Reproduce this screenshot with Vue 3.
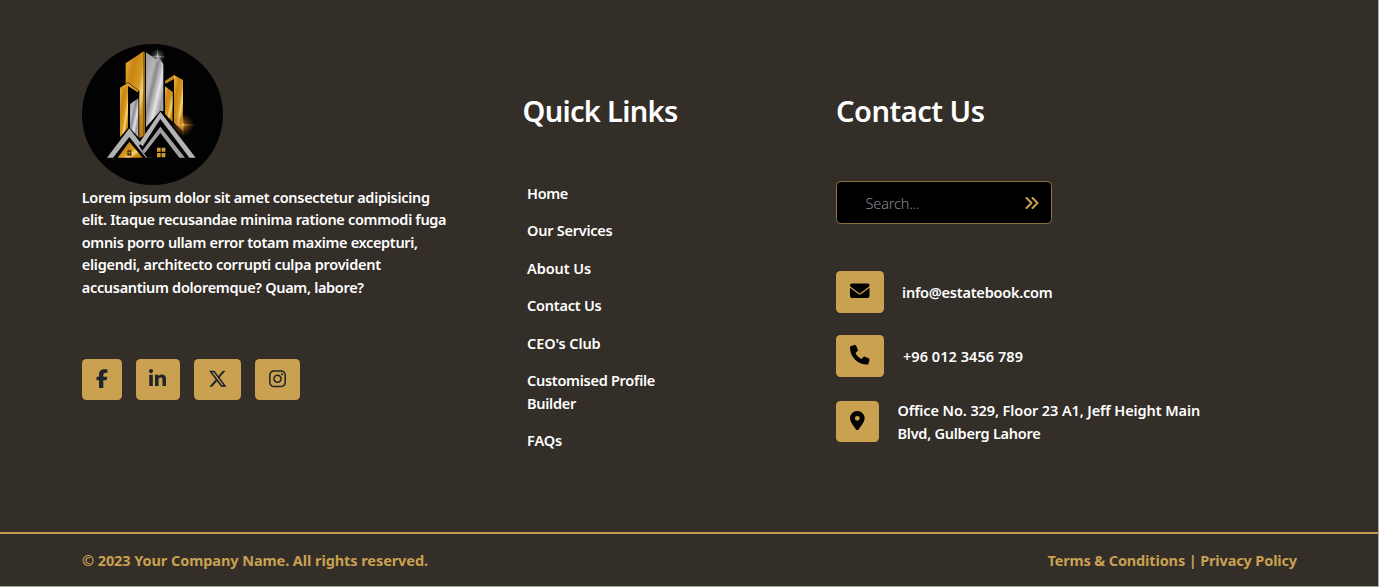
<script setup>
const about = [
  { text: 'Lorem ipsum dolor sit amet consectetur adipisicing', width: 348 },
  { text: 'elit. Itaque recusandae minima ratione commodi fuga', width: 364.5 },
  { text: 'omnis porro ullam error totam maxime excepturi,', width: 336 },
  { text: 'eligendi, architecto corrupti culpa provident', width: 299 },
  { text: 'accusantium doloremque? Quam, labore?', width: 282 },
]
const links = [
  [{ text: 'Home', width: 41 }],
  [{ text: 'Our Services', width: 85.5 }],
  [{ text: 'About Us', width: 64 }],
  [{ text: 'Contact Us', width: 74.5 }],
  [{ text: "CEO's Club", width: 73.5 }],
  [{ text: 'Customised Profile', width: 128 }, { text: 'Builder', width: 49 }],
  [{ text: 'FAQs', width: 35 }],
]
const office = [
  { text: 'Office No. 329, Floor 23 A1, Jeff Height Main', width: 302.5 },
  { text: 'Blvd, Gulberg Lahore', width: 143 },
]
const socials = [
  { name: 'Facebook', box: '0 0 320 512', w: 12, width: 40, d: 'M80 299.3V512H196V299.3h86.500l18-97.800H196V166.900c0-51.700 20.300-71.500 72.700-71.500c16.300 0 29.400 .4 37 1.200V7.900C291.400 4 256.400 0 236.200 0C129.300 0 80 50.500 80 159.400v42.100H14v97.800H80z' },
  { name: 'LinkedIn', box: '0 0 448 512', w: 17, width: 44.500, d: 'M100.280 448H7.400V148.900h92.880zM53.790 108.100C24.090 108.100 0 83.500 0 53.800a53.790 53.790 0 0 1 107.580 0c0 29.700-24.100 54.300-53.790 54.300zM447.900 448h-92.680V302.400c0-34.700-.7-79.200-48.290-79.200-48.290 0-55.690 37.700-55.690 76.700V448h-92.780V148.900h89.080v40.800h1.300c12.400-23.500 42.690-48.300 87.880-48.300 94 0 111.280 61.900 111.280 142.300V448z' },
  { name: 'X', box: '0 0 512 512', w: 19.500, width: 47.500, d: 'M389.200 48h70.600L305.600 224.200 487 464H345L233.700 318.600 106.500 464H35.800L200.700 275.500 26.800 48H172.400L272.900 180.900 389.200 48zM364.400 421.800h39.100L151.100 88h-42L364.400 421.800z' },
  { name: 'Instagram', box: '0 0 448 512', w: 17, width: 45, d: 'M224.100 141c-63.600 0-114.900 51.300-114.900 114.900s51.300 114.900 114.900 114.900S339 319.500 339 255.900 287.700 141 224.100 141zm0 189.600c-41.100 0-74.700-33.500-74.700-74.700s33.500-74.700 74.700-74.700 74.700 33.500 74.700 74.700-33.600 74.700-74.700 74.700zm146.400-194.300c0 14.900-12 26.800-26.800 26.800-14.900 0-26.800-12-26.800-26.800s12-26.800 26.800-26.800 26.800 12 26.800 26.800zm76.100 27.200c-1.700-35.900-9.900-67.700-36.200-93.900-26.200-26.200-58-34.400-93.900-36.200-37-2.100-147.900-2.100-184.900 0-35.800 1.700-67.600 9.900-93.900 36.100s-34.400 58-36.200 93.900c-2.100 37-2.100 147.900 0 184.900 1.700 35.900 9.900 67.700 36.200 93.900s58 34.400 93.900 36.200c37 2.100 147.900 2.100 184.900 0 35.900-1.700 67.700-9.900 93.900-36.200 26.200-26.200 34.400-58 36.200-93.900 2.100-37 2.100-147.800 0-184.800zM398.800 388c-7.800 19.600-22.900 34.700-42.600 42.600-29.500 11.700-99.500 9-132.100 9s-102.700 2.600-132.100-9c-19.600-7.800-34.700-22.900-42.600-42.600-11.700-29.500-9-99.500-9-132.100s-2.600-102.700 9-132.100c7.800-19.600 22.900-34.700 42.600-42.600 29.500-11.700 99.500-9 132.100-9s102.700-2.600 132.100 9c19.600 7.800 34.700 22.900 42.600 42.600 11.700 29.500 9 99.500 9 132.100s2.700 102.700-9 132.100z' },
]

const vFit = {
  mounted(el, { value }) {
    const natural = el.getBoundingClientRect().width
    el.style.letterSpacing = `${(value - natural) / el.textContent.length}px`
  },
}
</script>

<template>
  <footer class="footer">
    <div class="main">
      <section class="brand">
        <svg class="logo" viewBox="30 24 423 423" aria-label="Estatebook">
          <defs>
            <linearGradient id="gold" x1="0" y1="0" x2="1" y2="1">
              <stop offset="0" stop-color="#f0b43c" />
              <stop offset=".3" stop-color="#c88414" />
              <stop offset=".55" stop-color="#d8991f" />
              <stop offset=".68" stop-color="#f8d77a" />
              <stop offset=".8" stop-color="#d08d17" />
              <stop offset="1" stop-color="#b87408" />
            </linearGradient>
            <linearGradient id="silver" x1="0" y1="0" x2="1" y2="1">
              <stop offset="0" stop-color="#999" />
              <stop offset=".3" stop-color="#b8b8ba" />
              <stop offset=".42" stop-color="#8a8a8c" />
              <stop offset=".62" stop-color="#e4e4e6" />
              <stop offset=".78" stop-color="#9a9a9c" />
              <stop offset="1" stop-color="#bdbdbf" />
            </linearGradient>
            <radialGradient id="glow">
              <stop offset="0" stop-color="#ffe7ae" />
              <stop offset=".2" stop-color="#d68b28" stop-opacity=".75" />
              <stop offset="1" stop-color="#8c4510" stop-opacity="0" />
            </radialGradient>
            <radialGradient id="shine">
              <stop offset="0" stop-color="#fff" />
              <stop offset=".3" stop-color="#aaa" stop-opacity=".6" />
              <stop offset="1" stop-color="#777" stop-opacity="0" />
            </radialGradient>
          </defs>
          <circle cx="241.500" cy="235.500" r="211.500" fill="#020202" />
          <path d="M161 82 215 46V299L202 307V164L168 139 161 143Z" fill="url(#gold)" />
          <path d="M215 46 219 50V296L215 299Z" fill="#9e6812" />
          <path d="M222 49 250 68 263 67 274 84V226L265 224 222 274Z" fill="url(#silver)" />
          <path d="M144 158 168 148V276L144 304Z" fill="url(#gold)" />
          <path d="M168 140 200 164 197 169 169 151 145 160 144 155Z" fill="#d89b2b" />
          <path d="M174 204 199 187V304L174 276Z" fill="url(#silver)" />
          <path d="M279 151 302 168V258L279 234Z" fill="url(#gold)" />
          <path d="M306 117 333 132V284L306 260Z" fill="url(#gold)" />
          <path d="M279 135 306 117 306 129 280 143Z" fill="#c98b22" />
          <path d="M105 365 172 287 240 365" fill="#020202" />
          <path d="M137 365 172 317 212 365Z" fill="url(#gold)" />
          <path d="M105 365 172 277 240 365H222L172 303 123 365Z" fill="#b1b1b4" />
          <path d="M201 329 266 240 351 365H225Z" fill="#020202" />
          <path d="M201 322 265 227 371 365H352L265 249 212 331Z" fill="#b5b5b8" />
          <path d="M211 344 265 272 339 365H322L265 291 218 352Z" fill="#a0a0a3" />
          <path d="M166 344Q172 338 178 344V359H166Z" fill="#332009" />
          <path d="M172 341V359M166 350H178" stroke="#d69d31" stroke-width="2" />
          <path d="M255 335H266V347H255ZM269 335H280V347H269ZM255 351H266V364H255ZM269 351H280V364H269Z" fill="#d49a32" />
          <circle cx="257" cy="61" r="24" fill="url(#shine)" opacity=".7" />
          <path d="M257 38 260 60 279 62 260 66 257 81 254 66 237 61 254 59Z" fill="#c9c9c9" opacity=".5" />
          <circle cx="333" cy="267" r="34" fill="url(#glow)" opacity=".8" />
          <path d="M333 235 335 265 373 267 335 269 333 304 331 269 305 267 331 265Z" fill="#efb660" opacity=".5" />
        </svg>
        <p class="about">
          <span v-for="line in about" :key="line.text" class="line"><span v-fit="line.width">{{ line.text }}</span></span>
        </p>
        <div class="socials">
          <a v-for="s in socials" :key="s.name" class="tile" :aria-label="s.name" :style="{ width: s.width + 'px' }">
            <svg :viewBox="s.box" :style="{ width: s.w + 'px' }" class="glyph"><path :d="s.d" /></svg>
          </a>
        </div>
      </section>

      <nav class="quick">
        <h2><span v-fit="155">Quick Links</span></h2>
        <ul>
          <li v-for="(link, i) in links" :key="i">
            <span v-for="line in link" :key="line.text" class="line"><span v-fit="line.width">{{ line.text }}</span></span>
          </li>
        </ul>
      </nav>

      <section class="contact">
        <h2><span v-fit="148.500">Contact Us</span></h2>
        <div class="search">
          <span v-fit="54" class="placeholder">Search...</span>
          <svg class="chevrons" viewBox="0 0 14 12"><path d="M1.500 1 6.500 6 1.500 11M7.500 1 12.500 6 7.500 11" /></svg>
        </div>
        <div class="row mail">
          <span class="tile wide"><svg class="glyph black" viewBox="0 0 512 512"><path d="M48 64C21.500 64 0 85.500 0 112c0 15.100 7.100 29.300 19.200 38.400L236.800 313.600c11.400 8.500 27 8.500 38.400 0L492.800 150.400c12.100-9.100 19.200-23.300 19.200-38.400c0-26.500-21.500-48-48-48H48zM0 176V384c0 35.300 28.700 64 64 64H448c35.300 0 64-28.700 64-64V176L294.400 339.200c-22.800 17.100-54 17.100-76.800 0L0 176z" /></svg></span>
          <span class="line"><span v-fit="150.500">info@estatebook.com</span></span>
        </div>
        <div class="row phone">
          <span class="tile wide"><svg class="glyph black" viewBox="0 0 512 512"><path d="M164.900 24.600c-7.700-18.600-28-28.500-47.400-23.200l-88 24C12.100 30.200 0 46 0 64C0 311.400 200.600 512 448 512c18 0 33.800-12.100 38.600-29.500l24-88c5.300-19.400-4.600-39.700-23.200-47.400l-96-40c-16.300-6.800-35.200-2.100-46.300 11.600L304.700 368C234.300 334.700 177.300 277.700 144 207.300L193.300 167c13.700-11.200 18.400-30 11.600-46.300l-40-96z" /></svg></span>
          <span class="line"><span v-fit="120">+96 012 3456 789</span></span>
        </div>
        <div class="row place">
          <span class="tile pin"><svg class="glyph black" viewBox="0 0 384 512"><path d="M215.700 499.200C267 435 384 279.400 384 192C384 86 298 0 192 0S0 86 0 192c0 87.400 117 243 168.300 307.200c12.300 15.300 35.100 15.300 47.400 0zM192 128a64 64 0 1 1 0 128 64 64 0 1 1 0-128z" /></svg></span>
          <span>
            <span v-for="line in office" :key="line.text" class="line"><span v-fit="line.width">{{ line.text }}</span></span>
          </span>
        </div>
      </section>
    </div>
    <div class="bottom">
      <span v-fit="346">© 2023 Your Company Name. All rights reserved.</span>
      <span v-fit="249.500">Terms &amp; Conditions | Privacy Policy</span>
    </div>
  </footer>
</template>

<style>
body {
  margin: 0;
  background: #aaa6a1;
}
</style>

<style scoped>
.footer {
  box-sizing: border-box;
  width: 1378px;
  height: 586px;
  background: #332e28;
  color: #fff;
  font: 600 14.500px/22.500px "Noto Sans", "Open Sans", sans-serif;
  white-space: nowrap;
}
.main {
  display: grid;
  grid-template-columns: 440.750px 313.500px 1fr;
  height: 532px;
  padding-left: 81.750px;
}
.brand { padding-top: 44px; }
.logo {
  display: block;
  width: 141px;
  height: 141px;
}
.about { margin: .750px 0 0; }
.line { display: block; }
.socials {
  display: flex;
  gap: 13.800px;
  margin-top: 60.500px;
}
.tile {
  box-sizing: border-box;
  flex: none;
  display: flex;
  align-items: center;
  justify-content: center;
  height: 41.500px;
  padding-bottom: 2px;
  border-radius: 4.500px;
  background: #c9a150;
}
.glyph {
  height: 19.500px;
  fill: #212529;
}
.black { fill: #000; }
.wide { width: 47.500px; }
.pin { width: 43px; }
h2 {
  margin: 0;
  padding-top: 91px;
  font-size: 29px;
  font-weight: 600;
  line-height: 40px;
}
ul {
  margin: 50.750px 0 0;
  padding: 0 0 0 4.500px;
  list-style: none;
}
li { margin-bottom: 15px; }
.search {
  box-sizing: border-box;
  display: flex;
  align-items: center;
  justify-content: space-between;
  width: 216px;
  height: 43px;
  margin-top: 50px;
  padding: 1px 12px 0 28.500px;
  border: 1px solid #8f733d;
  border-radius: 4.500px;
  background: #000;
}
.placeholder {
  color: #858a8f;
  font-weight: 300;
}
.chevrons {
  width: 14px;
  height: 12px;
  fill: none;
  stroke: #c9a150;
  stroke-width: 2;
  stroke-linecap: round;
  stroke-linejoin: round;
}
.row {
  display: flex;
  align-items: center;
  gap: 18.500px;
}
.mail { margin-top: 47px; }
.phone { margin-top: 22.500px; gap: 19.500px; }
.place { margin-top: 22.500px; }
.bottom {
  box-sizing: border-box;
  display: flex;
  align-items: center;
  justify-content: space-between;
  height: 54px;
  padding: 0 81px 0 82px;
  border-top: 2px solid #c19a4d;
  color: #c9a150;
  font-weight: 700;
}
</style>
